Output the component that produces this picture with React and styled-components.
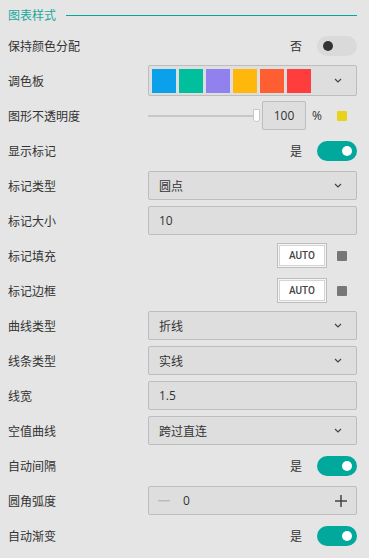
import React from "react";
import styled, { createGlobalStyle } from "styled-components";

const Global = createGlobalStyle`
  html, body { margin: 0; padding: 0; background: #e5e5e5; }
  body { font-family: "Noto Sans CJK SC", "Noto Sans", sans-serif; color: #333; }
`;

const Panel = styled.div`
  width: 369px;
  height: 558px;
  box-sizing: border-box;
  padding: 5px 12px 0 8px;
  background: #e5e5e5;
  display: flex;
  flex-direction: column;
`;

const Header = styled.div`
  display: flex;
  align-items: flex-start;
  gap: 10px;
  height: 21px;
  margin-bottom: 2px;
`;

const HeaderTitle = styled.span`
  font-size: 12px;
  color: #19a99d;
  line-height: 20px;
`;

const HeaderLine = styled.div`
  flex: 1;
  height: 0;
  margin-top: 10px;
  border-top: 1px solid #00aa9c;
`;

const Row = styled.div`
  display: flex;
  align-items: center;
  height: 35px;
  flex-shrink: 0;
`;

const Label = styled.span`
  width: 140px;
  font-size: 12px;
  color: #333;
  flex-shrink: 0;
`;

const Right = styled.div`
  flex: 1;
  display: flex;
  align-items: center;
  justify-content: ${(p) => p.$justify || "flex-start"};
`;

const Field = styled.div`
  flex: 1;
  height: ${(p) => p.$h || 29}px;
  box-sizing: border-box;
  border: 1px solid #bdbdbd;
  border-radius: 2px;
  background: #dedede;
  display: flex;
  align-items: center;
  padding: 0 ${(p) => p.$pr ?? 10}px 0 ${(p) => p.$pl ?? 10}px;
  font-size: 12px;
  color: #333;
`;

const FieldText = styled.span`
  flex: 1;
  font-family: ${(p) => (p.$num ? '"Open Sans", "Noto Sans", sans-serif' : '"Noto Sans CJK SC", sans-serif')};
  font-size: 12px;
`;

const Chevron = () => (
  <svg width="8" height="5" viewBox="0 0 8 5" fill="none">
    <path d="M1 1l3 3 3-3" stroke="#444" strokeWidth="1.2" />
  </svg>
);

const Swatches = styled.div`
  flex: 1;
  display: flex;
  gap: 3px;
`;

const Swatch = styled.div`
  width: 24px;
  height: 24px;
  background: ${(p) => p.$c};
`;

const YesNo = styled.span`
  font-size: 12px;
  color: #333;
  margin-right: 15px;
`;

const Toggle = styled.div`
  width: 40px;
  height: 20px;
  border-radius: 10px;
  background: ${(p) => (p.$on ? "#00a99b" : "#dadada")};
  position: relative;
  flex-shrink: 0;
`;

const Knob = styled.div`
  position: absolute;
  top: 5px;
  left: ${(p) => (p.$on ? 25 : 6)}px;
  width: 10px;
  height: 10px;
  border-radius: 50%;
  background: ${(p) => (p.$on ? "#fff" : "#333")};
`;

const Slider = styled.div`
  width: 110px;
  height: 2px;
  background: #c8c8c8;
  position: relative;
  margin-right: 4px;
`;

const Thumb = styled.div`
  position: absolute;
  right: -2px;
  top: -6px;
  width: 5px;
  height: 11px;
  background: #fff;
  border: 1px solid #c8c8c8;
  border-radius: 1px 1px 3px 3px;
`;

const NumBox = styled.div`
  width: 44px;
  height: 29px;
  box-sizing: border-box;
  border: 1px solid #bdbdbd;
  border-radius: 2px;
  background: #dedede;
  display: flex;
  align-items: center;
  justify-content: center;
  font-family: "Open Sans", sans-serif;
  font-size: 12px;
  color: #333;
`;

const Unit = styled.span`
  font-family: "Open Sans", sans-serif;
  font-size: 12px;
  margin-left: 6px;
  width: 25px;
`;

const ColorDot = styled.div`
  width: 10px;
  height: 10px;
  border-radius: 1px;
  background: ${(p) => p.$c};
  margin-right: 10px;
`;

const AutoBtn = styled.div`
  width: 50px;
  height: 25px;
  box-sizing: border-box;
  border: 1px solid #bdbdbd;
  padding: 1px;
  background: #f5f5f5;
  margin-right: 10px;
  display: flex;
`;

const AutoInner = styled.div`
  flex: 1;
  border: 1px solid #d4d4d4;
  background: #fff;
  display: flex;
  align-items: center;
  justify-content: center;
  font-family: Roboto, "Liberation Sans", sans-serif;
  font-weight: 500;
  font-size: 10px;
  color: #444;
`;

const StepBtn = styled.span`
  width: 14px;
  display: flex;
  align-items: center;
  justify-content: center;
`;

const StepValue = styled.span`
  flex: 1;
  font-family: "Open Sans", sans-serif;
  font-size: 12px;
  padding-left: 12px;
`;

const SelectField = ({ value }) => (
  <Field $pr={14}>
    <FieldText>{value}</FieldText>
    <Chevron />
  </Field>
);

const ToggleRow = ({ label, on }) => (
  <Row>
    <Label>{label}</Label>
    <Right $justify="flex-end">
      <YesNo>{on ? "是" : "否"}</YesNo>
      <Toggle $on={on}>
        <Knob $on={on} />
      </Toggle>
    </Right>
  </Row>
);

const AutoRow = ({ label }) => (
  <Row>
    <Label>{label}</Label>
    <Right $justify="flex-end">
      <AutoBtn>
        <AutoInner>AUTO</AutoInner>
      </AutoBtn>
      <ColorDot $c="#777" />
    </Right>
  </Row>
);

const palette = ["#0aa0ea", "#00bf9d", "#9181ef", "#ffb70b", "#ff5d32", "#ff3d3c"];

export default function App() {
  return (
    <>
      <Global />
      <Panel>
        <Header>
          <HeaderTitle>图表样式</HeaderTitle>
          <HeaderLine />
        </Header>
        <ToggleRow label="保持颜色分配" on={false} />
        <Row>
          <Label>调色板</Label>
          <Field $pl={3} $pr={14} $h={31}>
            <Swatches>
              {palette.map((c) => (
                <Swatch key={c} $c={c} />
              ))}
            </Swatches>
            <Chevron />
          </Field>
        </Row>
        <Row>
          <Label>图形不透明度</Label>
          <Right>
            <Slider>
              <Thumb />
            </Slider>
            <NumBox>100</NumBox>
            <Unit>%</Unit>
            <ColorDot $c="#e8d31a" />
          </Right>
        </Row>
        <ToggleRow label="显示标记" on />
        <Row>
          <Label>标记类型</Label>
          <SelectField value="圆点" />
        </Row>
        <Row>
          <Label>标记大小</Label>
          <Field>
            <FieldText $num>10</FieldText>
          </Field>
        </Row>
        <AutoRow label="标记填充" />
        <AutoRow label="标记边框" />
        <Row>
          <Label>曲线类型</Label>
          <SelectField value="折线" />
        </Row>
        <Row>
          <Label>线条类型</Label>
          <SelectField value="实线" />
        </Row>
        <Row>
          <Label>线宽</Label>
          <Field>
            <FieldText $num>1.5</FieldText>
          </Field>
        </Row>
        <Row>
          <Label>空值曲线</Label>
          <SelectField value="跨过直连" />
        </Row>
        <ToggleRow label="自动间隔" on />
        <Row>
          <Label>圆角弧度</Label>
          <Field $pl={8} $pr={8}>
            <StepBtn>
              <svg width="12" height="2" viewBox="0 0 12 2">
                <rect width="12" height="1.5" fill="#bbb" />
              </svg>
            </StepBtn>
            <StepValue>0</StepValue>
            <StepBtn>
              <svg width="12" height="12" viewBox="0 0 12 12">
                <rect x="0" y="5.25" width="12" height="1.5" fill="#444" />
                <rect x="5.25" y="0" width="1.5" height="12" fill="#444" />
              </svg>
            </StepBtn>
          </Field>
        </Row>
        <ToggleRow label="自动渐变" on />
      </Panel>
    </>
  );
}
